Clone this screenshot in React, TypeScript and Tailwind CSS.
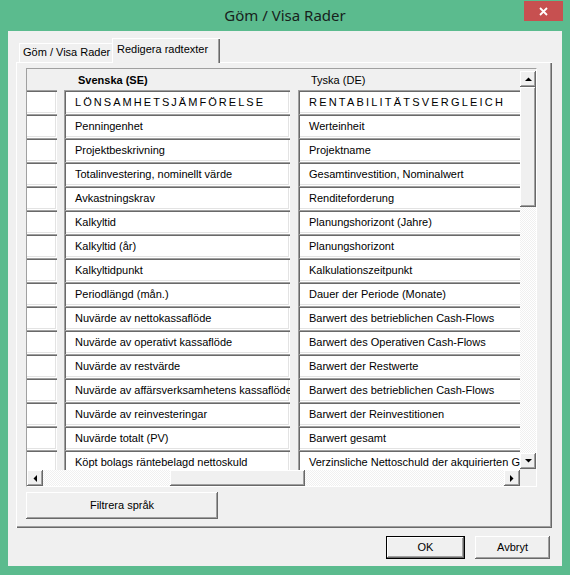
import React from 'react';

const raised =
  'bg-[#f0f0f0] shadow-[inset_-1px_-1px_0_#696969,inset_1px_1px_0_#ffffff,inset_-2px_-2px_0_#a0a0a0]';
const sunken =
  'bg-white shadow-[inset_1px_1px_0_#a0a0a0,inset_2px_2px_0_#696969,inset_-1px_-1px_0_#ffffff,inset_-2px_-2px_0_#e3e3e3]';
const hatch =
  'bg-[repeating-conic-gradient(#f0f0f0_0%_25%,#ffffff_0%_50%)] bg-[length:2px_2px]';

const rows: [string, string][] = [
  ['LÖNSAMHETSJÄMFÖRELSE', 'RENTABILITÄTSVERGLEICH'],
  ['Penningenhet', 'Werteinheit'],
  ['Projektbeskrivning', 'Projektname'],
  ['Totalinvestering, nominellt värde', 'Gesamtinvestition, Nominalwert'],
  ['Avkastningskrav', 'Renditeforderung'],
  ['Kalkyltid', 'Planungshorizont (Jahre)'],
  ['Kalkyltid (år)', 'Planungshorizont'],
  ['Kalkyltidpunkt', 'Kalkulationszeitpunkt'],
  ['Periodlängd (mån.)', 'Dauer der Periode (Monate)'],
  ['Nuvärde av nettokassaflöde', 'Barwert des betrieblichen Cash-Flows'],
  ['Nuvärde av operativt kassaflöde', 'Barwert des Operativen Cash-Flows'],
  ['Nuvärde av restvärde', 'Barwert der Restwerte'],
  ['Nuvärde av affärsverksamhetens kassaflöde', 'Barwert des betrieblichen Cash-Flows'],
  ['Nuvärde av reinvesteringar', 'Barwert der Reinvestitionen'],
  ['Nuvärde totalt (PV)', 'Barwert gesamt'],
  ['Köpt bolags räntebelagd nettoskuld', 'Verzinsliche Nettoschuld der akquirierten Gesellschaft'],
];

const Arrow = ({ dir }: { dir: 'up' | 'down' | 'left' | 'right' }) => {
  const pts = {
    up: '0,4 7,4 3.5,0.5',
    down: '0,0 7,0 3.5,3.5',
    left: '4,0 4,7 0.5,3.5',
    right: '0,0 0,7 3.5,3.5',
  }[dir];
  const vertical = dir === 'up' || dir === 'down';
  return (
    <svg width={vertical ? 7 : 4} height={vertical ? 4 : 7} viewBox={vertical ? '0 0 7 4' : '0 0 4 7'}>
      <polygon points={pts} fill="#000" />
    </svg>
  );
};

const ScrollBtn = ({ dir }: { dir: 'up' | 'down' | 'left' | 'right' }) => (
  <div className={`w-[16px] h-[16px] shrink-0 flex items-center justify-center ${raised}`}>
    <Arrow dir={dir} />
  </div>
);

const App: React.FC = () => {
  return (
    <div className="w-[570px] h-[575px] bg-[#5bbb8e] flex flex-col font-['Liberation_Sans',Arial,sans-serif] text-[11px] text-black">
      <div className="h-[31px] relative flex items-center justify-center">
        <span className="font-['Noto_Sans',sans-serif] text-[15px] text-[#17221c] -mt-[1px]">Göm / Visa Rader</span>
        <div className="absolute right-[7px] top-[1px] w-[39px] h-[20px] bg-[#c75050] flex items-center justify-center">
          <svg width="9" height="9" viewBox="0 0 9 9">
            <path d="M1 1 L8 8 M8 1 L1 8" stroke="#fff" strokeWidth="1.8" />
          </svg>
        </div>
      </div>

      <div className="mx-[8px] h-[535px] bg-[#f0f0f0] flex flex-col px-[8px]">
        {/* tabs */}
        <div className="h-[31px] flex items-end pl-[3px] shrink-0">
          <div className="w-[93px] h-[19px] flex items-center pl-[4px] shadow-[inset_1px_1px_0_#ffffff]">
            Göm / Visa Rader
          </div>
          <div className="relative z-10 translate-y-[1px] w-[108px] h-[25px] bg-[#f0f0f0] flex items-center pl-[5px] pb-[3px] shadow-[inset_1px_1px_0_#ffffff,inset_-1px_0_0_#696969,inset_-2px_0_0_#a0a0a0]">
            Redigera radtexter
          </div>
        </div>

        {/* tab panel */}
        <div className="w-[536px] h-[466px] shrink-0 flex flex-col pl-[10px] pt-[6px] shadow-[inset_1px_1px_0_#ffffff,inset_-1px_-1px_0_#696969,inset_-2px_-2px_0_#a0a0a0]">
          <div className="w-[511px] h-[419px] flex flex-col border border-t-[#a0a0a0] border-l-[#a0a0a0] border-r-white border-b-white">
            <div className="flex h-[401px]">
              <div className="w-[493px] overflow-hidden">
                <div className="h-[21px] flex items-center pt-[1px]">
                  <div className="w-[37px] shrink-0" />
                  <div className="w-[226px] shrink-0 pl-[14px] font-bold">Svenska (SE)</div>
                  <div className="w-[8px] shrink-0" />
                  <div className="pl-[13px]">Tyska (DE)</div>
                </div>
                {rows.map(([se, de], i) => (
                  <div key={i} className="h-[24px] flex">
                    <div className={`ml-[-4px] w-[34px] h-[24px] shrink-0 ${sunken}`} />
                    <div className="w-[7px] shrink-0" />
                    <div
                      className={`w-[226px] h-[24px] shrink-0 flex items-center pl-[11px] whitespace-nowrap overflow-hidden ${sunken} ${
                        i === 0 ? 'tracking-[2.05px]' : ''
                      }`}
                    >
                      {se}
                    </div>
                    <div className="w-[8px] shrink-0" />
                    <div
                      className={`w-[270px] h-[24px] shrink-0 flex items-center pl-[11px] whitespace-nowrap overflow-hidden ${sunken} ${
                        i === 0 ? 'tracking-[2.2px]' : ''
                      }`}
                    >
                      {de}
                    </div>
                  </div>
                ))}
              </div>
              <div className="w-[16px] flex flex-col pt-[2px] pb-[1px]">
                <ScrollBtn dir="up" />
                <div className={`h-[120px] shrink-0 ${raised}`} />
                <div className={`flex-1 ${hatch}`} />
                <ScrollBtn dir="down" />
              </div>
            </div>
            <div className="flex h-[16px]">
              <ScrollBtn dir="left" />
              <div className={`w-[127px] shrink-0 ${hatch}`} />
              <div className={`w-[135px] shrink-0 ${raised}`} />
              <div className={`flex-1 ${hatch}`} />
              <ScrollBtn dir="right" />
              <div className="w-[16px] bg-[#f0f0f0]" />
            </div>
          </div>
          <button className={`mt-[5px] w-[192px] h-[27px] flex items-center justify-center ${raised}`}>
            Filtrera språk
          </button>
        </div>

        {/* dialog buttons */}
        <div className="flex justify-end gap-[10px] pr-[4px] pt-[8px]">
          <button className="w-[79px] h-[23px] border border-black">
            <div className={`w-full h-full flex items-center justify-center ${raised}`}>OK</div>
          </button>
          <button className={`w-[75px] h-[23px] flex items-center justify-center ${raised}`}>Avbryt</button>
        </div>
      </div>
    </div>
  );
};

export default App;
